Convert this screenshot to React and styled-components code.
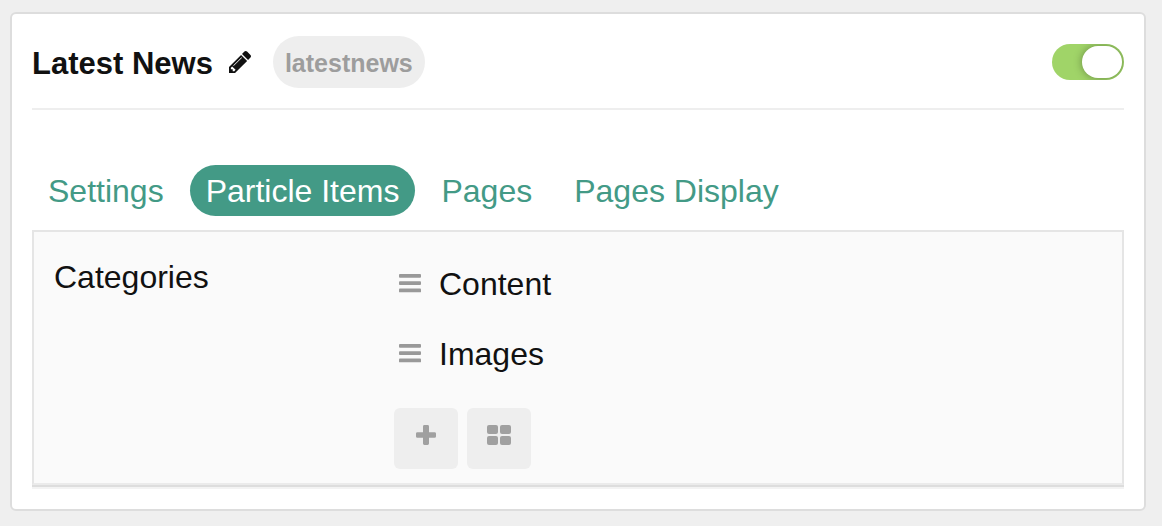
import React, { useState } from "react";
import styled, { createGlobalStyle } from "styled-components";

const GlobalStyle = createGlobalStyle`
  * { box-sizing: border-box; }
  body {
    margin: 0;
    padding: 12px 16px 15px 10px;
    background: #efefef;
    color: #111;
    font: 32px/36px "Liberation Sans", Helvetica, Arial, sans-serif;
  }
  button, input { font: inherit; color: inherit; margin: 0; }
`;

const Card = styled.section`
  padding: 0 20px 20px;
  background: #fff;
  border: 2px solid #ddd;
  border-radius: 6px;
`;

const Header = styled.header`
  display: flex;
  align-items: center;
  padding: 22px 0 20px;
  border-bottom: 2px solid #eee;
`;

const Title = styled.h1`
  margin: 0;
  padding-top: 4px;
  font-size: 31px;
  font-weight: 700;
  line-height: 48px;
`;

const EditButton = styled.button`
  display: flex;
  margin: 0 22px 0 16px;
  padding: 0;
  border: 0;
  background: none;
  cursor: pointer;
`;

const Badge = styled.span`
  padding: 2px 12px 0;
  border-radius: 26px;
  background: #eee;
  color: #9d9d9d;
  font-size: 25px;
  font-weight: 700;
  line-height: 50px;
`;

const Toggle = styled.input`
  appearance: none;
  display: flex;
  justify-content: ${(p) => (p.checked ? "flex-end" : "flex-start")};
  width: 72px;
  height: 36px;
  margin-left: auto;
  padding: 2px;
  border-radius: 18px;
  overflow: hidden;
  background: ${(p) => (p.checked ? "#a0d468" : "#ddd")};
  cursor: pointer;

  &::after {
    content: "";
    width: 40px;
    border-radius: 16px;
    background: #fff;
    box-shadow: 0 0 8px rgba(0, 0, 0, 0.35);
  }
`;

const Tabs = styled.div`
  display: flex;
  gap: 10px;
  padding: 55px 0 14px;
`;

const Tab = styled.button`
  padding: 2px 16px 0;
  border: 0;
  border-radius: 26px;
  background: ${(p) => (p.$active ? "#439a86" : "transparent")};
  color: ${(p) => (p.$active ? "#fff" : "#439a86")};
  line-height: 49px;
  cursor: pointer;
`;

const Panel = styled.div`
  display: grid;
  grid-template-columns: 340px 1fr;
  margin-bottom: 4px;
  padding: 18px 20px 14px;
  border: 2px solid #e5e5e5;
  border-bottom-color: #ebebeb;
  background: #fafafa;
  box-shadow: 0 2px #ddd, 0 4px #f3f3f3;
`;

const FieldLabel = styled.h2`
  margin: 9px 0 0;
  font-size: 32px;
  font-weight: 400;
  line-height: 36px;
`;

const ItemList = styled.ul`
  display: grid;
  gap: 18px;
  margin: 0 0 20px;
  padding: 8px 0;
  list-style: none;
`;

const Item = styled.li`
  display: flex;
  align-items: center;
  gap: 18px;
  padding: 0 5px;
  line-height: 52px;

  svg { flex: none; }
`;

const Actions = styled.div`
  display: flex;
  gap: 9px;
`;

const ActionButton = styled.button`
  display: flex;
  justify-content: center;
  width: 64px;
  height: 61px;
  padding: 17px 0 0;
  border: 0;
  border-radius: 6px;
  background: #eee;
  color: #a0a0a0;
  cursor: pointer;
`;

const PencilIcon = () => (
  <svg width="22" height="22" viewBox="128 149 1515 1515" fill="currentColor" aria-hidden="true">
    <path d="M491 1536l91-91-235-235-91 91v107h128v128h107zm523-928q0-22-22-22-10 0-17 7l-542 542q-7 7-7 17 0 22 22 22 10 0 17-7l542-542q7-7 7-17zm-54-192l416 416-832 832h-416v-416zm683 96q0 53-37 90l-166 166-416-416 166-165q36-38 90-38 53 0 91 38l235 234q37 39 37 91z" />
  </svg>
);

const HandleIcon = () => (
  <svg width="22" height="20" viewBox="0 0 22 20" fill="#999" aria-hidden="true">
    <rect y="0" width="22" height="3.7" rx="0.9" />
    <rect y="7.3" width="22" height="3.7" rx="0.9" />
    <rect y="14.6" width="22" height="3.7" rx="0.9" />
  </svg>
);

const PlusIcon = () => (
  <svg width="20" height="20" viewBox="0 0 20 20" fill="currentColor" aria-hidden="true">
    <path d="M8.4 0h3.2Q13 0 13 1.4V7.2h5.6Q20 7.2 20 8.6v2.8q0 1.4-1.4 1.4H13v5.8q0 1.4-1.4 1.4H8.4Q7 20 7 18.6v-5.8H1.4Q0 12.8 0 11.4V8.6Q0 7.2 1.4 7.2H7V1.4Q7 0 8.4 0z" />
  </svg>
);

const GridIcon = () => (
  <svg width="24" height="20" viewBox="0 0 24 20" fill="currentColor" aria-hidden="true">
    <rect width="11" height="9" rx="2" />
    <rect x="13" width="11" height="9" rx="2" />
    <rect y="11" width="11" height="9" rx="2" />
    <rect x="13" y="11" width="11" height="9" rx="2" />
  </svg>
);

const TABS = ["Settings", "Particle Items", "Pages", "Pages Display"];
const ITEMS = ["Content", "Images"];

export default function App() {
  const [enabled, setEnabled] = useState(true);
  const [active, setActive] = useState("Particle Items");

  return (
    <>
      <GlobalStyle />
      <Card>
        <Header>
          <Title>Latest News</Title>
          <EditButton type="button" aria-label="Edit title">
            <PencilIcon />
          </EditButton>
          <Badge>latestnews</Badge>
          <Toggle
            type="checkbox"
            aria-label="Enabled"
            checked={enabled}
            onChange={(e) => setEnabled(e.target.checked)}
          />
        </Header>
        <Tabs role="tablist">
          {TABS.map((name) => (
            <Tab
              key={name}
              type="button"
              role="tab"
              aria-selected={name === active}
              $active={name === active}
              onClick={() => setActive(name)}
            >
              {name}
            </Tab>
          ))}
        </Tabs>
        <Panel role="tabpanel" aria-label={active}>
          <FieldLabel>Categories</FieldLabel>
          <div>
            <ItemList>
              {ITEMS.map((name) => (
                <Item key={name}>
                  <HandleIcon />
                  {name}
                </Item>
              ))}
            </ItemList>
            <Actions>
              <ActionButton type="button" aria-label="Add item">
                <PlusIcon />
              </ActionButton>
              <ActionButton type="button" aria-label="Edit all items">
                <GridIcon />
              </ActionButton>
            </Actions>
          </div>
        </Panel>
      </Card>
    </>
  );
}
